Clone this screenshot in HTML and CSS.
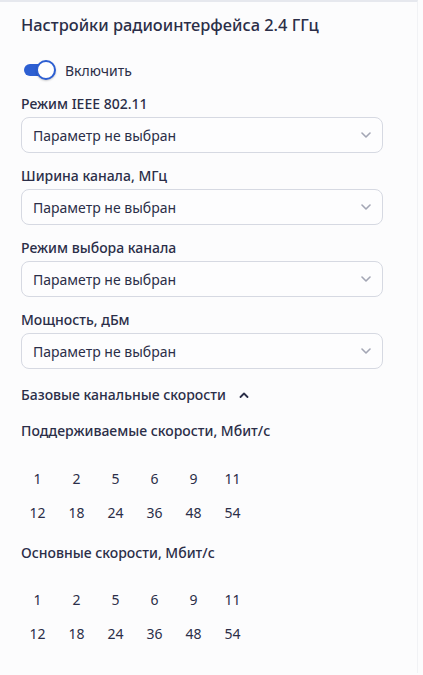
FILE: index.html
```
<!DOCTYPE html>
<html lang="ru">
<head>
  <meta charset="UTF-8">
  <meta name="viewport" content="width=device-width, initial-scale=1.0">
  <title>Настройки радиоинтерфейса 2.4 ГГц</title>
  <link rel="stylesheet" href="styles.css">
</head>
<body>
  <main class="panel">
    <h2 class="title">Настройки радиоинтерфейса 2.4 ГГц</h2>

    <label class="switch-row">
      <span class="switch"><span class="switch-knob"></span></span>
      <span>Включить</span>
    </label>

    <div class="field">
      <div class="field-label">Режим IEEE 802.11</div>
      <div class="select">
        <span>Параметр не выбран</span>
        <svg class="select-arrow" width="10" height="6" viewBox="0 0 10 6"><path d="M1 1l4 4 4-4" fill="none" stroke="#a3a6b4" stroke-width="1.6" stroke-linecap="round" stroke-linejoin="round"/></svg>
      </div>
    </div>

    <div class="field">
      <div class="field-label">Ширина канала, МГц</div>
      <div class="select">
        <span>Параметр не выбран</span>
        <svg class="select-arrow" width="10" height="6" viewBox="0 0 10 6"><path d="M1 1l4 4 4-4" fill="none" stroke="#a3a6b4" stroke-width="1.6" stroke-linecap="round" stroke-linejoin="round"/></svg>
      </div>
    </div>

    <div class="field">
      <div class="field-label">Режим выбора канала</div>
      <div class="select">
        <span>Параметр не выбран</span>
        <svg class="select-arrow" width="10" height="6" viewBox="0 0 10 6"><path d="M1 1l4 4 4-4" fill="none" stroke="#a3a6b4" stroke-width="1.6" stroke-linecap="round" stroke-linejoin="round"/></svg>
      </div>
    </div>

    <div class="field">
      <div class="field-label">Мощность, дБм</div>
      <div class="select">
        <span>Параметр не выбран</span>
        <svg class="select-arrow" width="10" height="6" viewBox="0 0 10 6"><path d="M1 1l4 4 4-4" fill="none" stroke="#a3a6b4" stroke-width="1.6" stroke-linecap="round" stroke-linejoin="round"/></svg>
      </div>
    </div>

    <div class="collapse-head">
      <span>Базовые канальные скорости</span>
      <svg width="10" height="6" viewBox="0 0 10 6"><path d="M1.5 5l3.5-3.5 3.5 3.5" fill="none" stroke="#2b2e48" stroke-width="1.8" stroke-linecap="round" stroke-linejoin="round"/></svg>
    </div>

    <div class="rates-title">Поддерживаемые скорости, Мбит/с</div>
    <div class="rates">
      <span>1</span><span>2</span><span>5</span><span>6</span><span>9</span><span>11</span>
      <span>12</span><span>18</span><span>24</span><span>36</span><span>48</span><span>54</span>
    </div>

    <div class="rates-title">Основные скорости, Мбит/с</div>
    <div class="rates">
      <span>1</span><span>2</span><span>5</span><span>6</span><span>9</span><span>11</span>
      <span>12</span><span>18</span><span>24</span><span>36</span><span>48</span><span>54</span>
    </div>
  </main>
</body>
</html>
```

FILE: styles.css
```
body {
  margin: 0;
  background: #fcfcfd;
  font-family: "Noto Sans", "Open Sans", sans-serif;
  color: #2b2e48;
}

.panel {
  border-top: 2px solid #e6e8ee;
  border-right: 1px solid #f1f2f5;
  width: 418px;
  height: 673px;
  padding: 11px 0 0 21px;
  box-sizing: border-box;
}

.title {
  margin: 0;
  font-size: 16.4px;
  font-weight: 500;
  line-height: 24px;
}

.switch-row {
  display: flex;
  align-items: center;
  gap: 9px;
  margin: 21px 0 0 3px;
  height: 24px;
  font-size: 14px;
}

.switch {
  position: relative;
  width: 32px;
  height: 20px;
  display: flex;
  align-items: center;
}

.switch::before {
  content: '';
  width: 28px;
  height: 12px;
  border-radius: 6px;
  background: #2d5fd2;
}

.switch-knob {
  position: absolute;
  right: 0;
  top: 0;
  width: 16px;
  height: 16px;
  border: 2px solid #2d5fd2;
  border-radius: 50%;
  background: #fff;
  box-shadow: 0 1px 2px rgba(0, 0, 0, 0.2);
}

.field {
  margin-top: 12px;
}

.field + .field {
  margin-top: 13px;
}

.field-label {
  font-size: 14px;
  font-weight: 500;
  line-height: 20px;
  margin-bottom: 3px;
}

.select {
  display: flex;
  align-items: center;
  justify-content: space-between;
  width: 362px;
  height: 36px;
  box-sizing: border-box;
  padding: 0 11px 0 11px;
  border: 1px solid #d6d9e2;
  border-radius: 8px;
  background: #fdfdfe;
  font-size: 14px;
}

.collapse-head {
  display: flex;
  align-items: center;
  gap: 13px;
  margin-top: 16px;
  font-size: 14px;
  font-weight: 500;
  line-height: 20px;
}

.rates-title {
  margin-top: 16px;
  font-size: 14px;
  font-weight: 500;
  line-height: 20px;
}

.rates {
  display: grid;
  grid-template-columns: repeat(6, 39px);
  grid-auto-rows: 34px;
  align-items: center;
  margin: 20px 0 0 -3px;
  font-size: 14px;
  text-align: center;
}

.rates + .rates-title {
  margin-top: 14px;
}

.rates:last-child {
  margin-top: 19px;
}
```
